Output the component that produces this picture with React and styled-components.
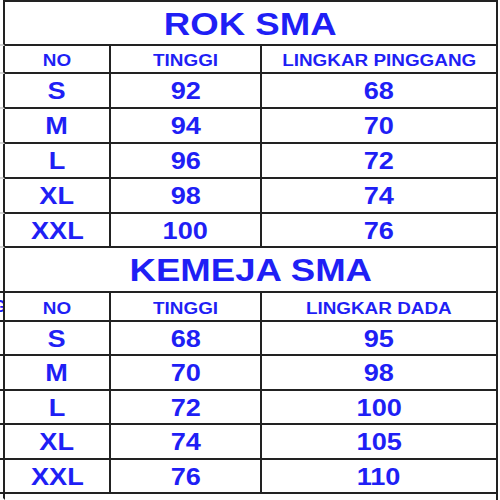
import React from 'react';
import styled, {createGlobalStyle} from 'styled-components';

const BLUE = '#1f1ff5';
const INK = '#222';

const GlobalStyle = createGlobalStyle`
  html, body {
    margin: 0;
    padding: 0;
    background: #fff;
  }
  body {
    font-family: "Liberation Sans", Arial, sans-serif;
  }
`;

const rok = [
  ['S', 92, 68],
  ['M', 94, 70],
  ['L', 96, 72],
  ['XL', 98, 74],
  ['XXL', 100, 76],
];

const kemeja = [
  ['S', 68, 95],
  ['M', 70, 98],
  ['L', 72, 100],
  ['XL', 74, 105],
  ['XXL', 76, 110],
];

export default function App() {
  return (
    <>
      <GlobalStyle/>
      <Sheet>
        <SizeBlock title="ROK SMA" measure="LINGKAR PINGGANG" rows={rok} stubLine="#d6d6d6" first/>
        <SizeBlock title="KEMEJA SMA" measure="LINGKAR DADA" rows={kemeja} stubLine={INK} stubText="G"/>
        <Stub $line="transparent"/>
        <Filler/>
      </Sheet>
    </>
  );
}

const SizeBlock = ({title, measure, rows, stubLine, stubText, first}) => {
  return <>
    <Stub $line={stubLine}/>
    <TitleCell $top={first}>
      <Stretch>{title}</Stretch>
    </TitleCell>

    <Stub $line={stubLine}>{stubText && <StubText>{stubText}</StubText>}</Stub>
    <HeadCell><Stretch>NO</Stretch></HeadCell>
    <HeadCell><Stretch>TINGGI</Stretch></HeadCell>
    <HeadCell><Stretch>{measure}</Stretch></HeadCell>

    {rows.map(([size, height, girth]) => (
      <React.Fragment key={size}>
        <Stub $line={stubLine}/>
        <DataCell><Stretch>{size}</Stretch></DataCell>
        <DataCell><Stretch>{height}</Stretch></DataCell>
        <DataCell><Stretch>{girth}</Stretch></DataCell>
      </React.Fragment>
    ))}
  </>;
};

const Sheet = styled.div`
  display: grid;
  grid-template-columns: 5px 106px 151px 236px;
  grid-template-rows: 46px 28px 35px 35px 35px 35px 34px 45px 29px 34px 35px 34px 35px 34px 6px;
  width: 498px;
  height: 500px;
  color: ${BLUE};
  font-weight: bold;
`;

const Stub = styled.div`
  box-sizing: border-box;
  display: flex;
  justify-content: flex-end;
  align-items: center;
  overflow: hidden;
  border-right: 2px solid ${INK};
  border-bottom: 2px solid ${({$line}) => $line};
`;

const StubText = styled.span`
  font-size: 16px;
  margin-right: -3px;
  white-space: nowrap;
`;

const Cell = styled.div`
  box-sizing: border-box;
  display: flex;
  justify-content: center;
  align-items: center;
  white-space: nowrap;
  border-right: 2px solid ${INK};
  border-bottom: 2px solid ${INK};
`;

const TitleCell = styled(Cell)`
  grid-column: span 3;
  font-size: 31px;
  padding-top: 3px;
  border-top: ${({$top}) => ($top ? `2px solid ${INK}` : 'none')};
`;

const HeadCell = styled(Cell)`
  font-size: 16px;
  padding-top: 4px;
`;

const DataCell = styled(Cell)`
  font-size: 23px;
  padding-top: 2px;
`;

const Filler = styled.div`
  grid-column: span 3;
  border-right: 2px solid ${INK};
`;

const Stretch = styled.span`
  display: inline-block;
  transform: scaleX(1.18);
`;
